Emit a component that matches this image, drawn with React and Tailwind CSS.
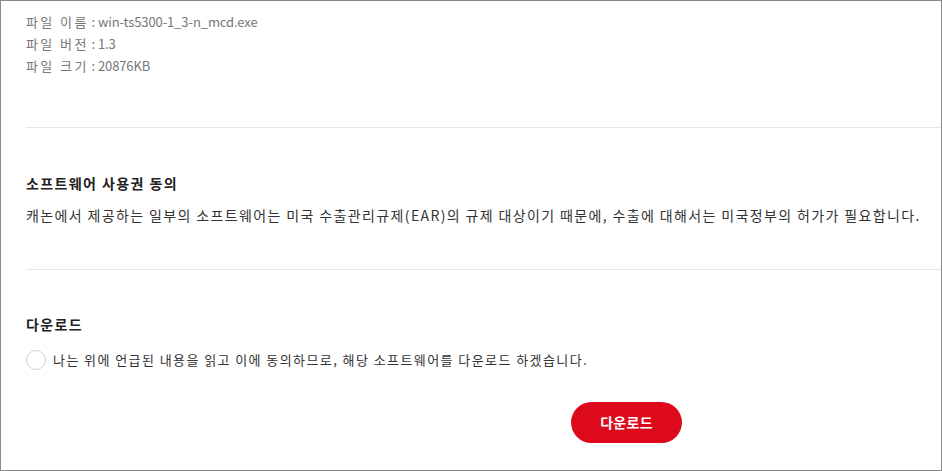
export default function App() {
  const font = { fontFamily: '"Noto Sans CJK KR", "Noto Sans", sans-serif' };
  const files = [
    ["파일 이름", "win-ts5300-1_3-n_mcd.exe"],
    ["파일 버전", "1.3"],
    ["파일 크기", "20876KB"],
  ];
  return (
    <div
      className="w-[942px] h-[471px] border border-[#8a8a8a] bg-white overflow-hidden box-border"
      style={font}
    >
      <div className="pl-[25px]">
        {/* file info */}
        <div className="pt-[10px] text-[13px] leading-[22px] text-[#777]">
          {files.map(([k, v]) => (
            <p key={k}>
              <span className="tracking-[2.4px]">{k}</span>
              <span className="tracking-[-0.1px]"> : {v}</span>
            </p>
          ))}
        </div>

        <div className="mt-[50px] h-px bg-[#e6e6e6]" />

        {/* license */}
        <h3 className="mt-[45px] text-[14px] leading-[20px] font-bold text-[#222] tracking-[1.4px]">
          소프트웨어 사용권 동의
        </h3>
        <p className="mt-[11px] text-[14px] leading-[22px] text-[#333] tracking-[1.37px]">
          캐논에서 제공하는 일부의 소프트웨어는 미국 수출관리규제(EAR)의 규제 대상이기 때문에, 수출에 대해서는 미국정부의 허가가 필요합니다.
        </p>

        <div className="mt-[43px] h-px bg-[#e6e6e6]" />

        {/* download */}
        <h3 className="mt-[44px] text-[14px] leading-[20px] font-bold text-[#222] tracking-[1.4px]">
          다운로드
        </h3>
        <label className="mt-[16px] flex items-center gap-[7px] cursor-pointer">
          <span className="w-[20px] h-[20px] rounded-full border border-[#cfcfcf] bg-white shrink-0" />
          <span className="text-[13px] leading-[20px] text-[#333] tracking-[1.42px]">
            나는 위에 언급된 내용을 읽고 이에 동의하므로, 해당 소프트웨어를 다운로드 하겠습니다.
          </span>
        </label>

        <button className="mt-[32px] ml-[545px] w-[111px] h-[41px] rounded-full bg-[#dd0a1c] text-white text-[14px] font-bold tracking-[0.3px]">
          다운로드
        </button>
      </div>
    </div>
  );
}
